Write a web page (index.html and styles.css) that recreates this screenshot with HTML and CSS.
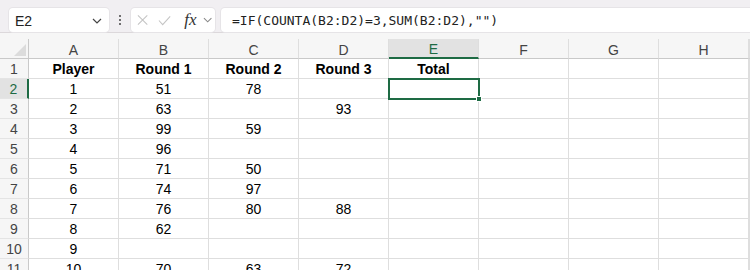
FILE: index.html
```html
<!DOCTYPE html>
<html lang="en">

<head>
    <meta charset="UTF-8">
    <title>Workbook - Sheet1</title>
    <link rel="stylesheet" href="styles.css">
</head>

<body>
    <div class="toolbar">
        <div class="name-box">
            <span>E2</span>
            <svg class="chev" width="10" height="6" viewBox="0 0 10 6"><path d="M1 1l4 4 4-4" fill="none" stroke="#444" stroke-width="1.2"/></svg>
        </div>
        <div class="dots"><i></i><i></i><i></i></div>
        <div class="fx-box">
            <svg width="12" height="12" viewBox="0 0 12 12"><path d="M1 1l10 10M11 1L1 11" stroke="#c4c4c4" stroke-width="1.1"/></svg>
            <svg width="14" height="11" viewBox="0 0 14 11"><path d="M1 5.5l4 4.5 8-9" fill="none" stroke="#c4c4c4" stroke-width="1.1"/></svg>
            <span class="fx">fx</span>
            <svg class="chev" width="10" height="6" viewBox="0 0 10 6"><path d="M1 1l4 4 4-4" fill="none" stroke="#888" stroke-width="1.1"/></svg>
        </div>
        <div class="formula">=IF(COUNTA(B2:D2)=3,SUM(B2:D2),"")</div>
    </div>
    <div class="gap"></div>
    <div class="sheet" id="sheet"></div>

    <script>
        const cols = ['A', 'B', 'C', 'D', 'E', 'F', 'G', 'H', ''];
        const data = [
            ['Player', 'Round 1', 'Round 2', 'Round 3', 'Total'],
            ['1', '51', '78'],
            ['2', '63', '', '93'],
            ['3', '99', '59'],
            ['4', '96'],
            ['5', '71', '50'],
            ['6', '74', '97'],
            ['7', '76', '80', '88'],
            ['8', '62'],
            ['9'],
            ['10', '70', '63', '72']
        ];

        const sheet = document.getElementById('sheet');

        function cell(cls, text) {
            const d = document.createElement('div');
            d.className = cls;
            d.textContent = text || '';
            sheet.appendChild(d);
            return d;
        }

        // header row
        cell('corner');
        cols.forEach(c => cell(c === 'E' ? 'col-head active' : 'col-head', c));

        // data rows
        data.forEach((row, r) => {
            cell(r === 1 ? 'row-head active' : 'row-head', r + 1);
            cols.forEach((c, i) => {
                let cls = 'cell';
                if (r === 0) cls += ' bold';
                if (r === 1 && c === 'E') cls += ' selected';
                cell(cls, row[i]);
            });
        });
    </script>
</body>

</html>
```

FILE: styles.css
```css
body {
    margin: 0;
    width: 750px;
    height: 270px;
    overflow: hidden;
    background: #fff;
    font-family: "Liberation Sans", Arial, sans-serif;
}

.toolbar {
    height: 33px;
    display: flex;
    align-items: flex-start;
    padding: 8px 0 0 9px;
    box-sizing: border-box;
    background: #f1eff2;
    border-bottom: 1px solid #dcd8db;
}

.name-box {
    width: 100px;
    height: 24px;
    box-sizing: border-box;
    display: flex;
    align-items: center;
    justify-content: space-between;
    padding: 1px 7px 0 6px;
    background: #fff;
    border-radius: 4px;
    box-shadow: 0 0 0 1px #e6e4e7;
    font-size: 14px;
    color: #222;
}

.dots {
    width: 22px;
    height: 24px;
    display: flex;
    flex-direction: column;
    align-items: center;
    justify-content: center;
    gap: 2px;
}

.dots i {
    width: 2px;
    height: 2px;
    background: #444;
    border-radius: 1px;
}

.fx-box {
    width: 84px;
    height: 24px;
    box-sizing: border-box;
    display: flex;
    align-items: center;
    gap: 10px;
    padding: 0 3px 0 6px;
    background: #fff;
    border-radius: 4px;
    box-shadow: 0 0 0 1px #e6e4e7;
}

.fx-box .fx {
    font-family: "Liberation Serif", serif;
    font-style: italic;
    font-size: 17px;
    color: #333;
    margin-left: 3px;
    margin-right: -4px;
}

.formula {
    flex: 1;
    height: 24px;
    margin-left: 6px;
    padding: 1px 0 0 11px;
    box-sizing: border-box;
    line-height: 24px;
    background: #fff;
    border-radius: 4px 0 0 4px;
    box-shadow: 0 0 0 1px #e6e4e7;
    font-family: "DejaVu Sans Mono", "Liberation Mono", monospace;
    font-size: 13px;
    color: #222;
}

.gap {
    height: 6px;
    background: #f6f6f6;
}

.sheet {
    display: grid;
    grid-template-columns: 29px repeat(8, 90px) 1px;
    grid-auto-rows: 20px;
    font-size: 14px;
}

.sheet > div {
    box-sizing: border-box;
    display: flex;
    align-items: center;
    justify-content: center;
    padding-top: 1px;
    white-space: nowrap;
}

.corner {
    background: #f6f6f6;
    border-right: 1px solid #c9c9c9;
    border-bottom: 1px solid #c9c9c9;
    position: relative;
}

.corner::after {
    content: "";
    position: absolute;
    right: 2px;
    bottom: 2px;
    border-style: solid;
    border-width: 0 0 12px 12px;
    border-color: transparent transparent #dcdcdc transparent;
}

.sheet > .col-head {
    padding-top: 2px;
    background: #f6f6f6;
    color: #444;
    border-right: 1px solid #dedede;
    border-bottom: 1px solid #c9c9c9;
}

.col-head.active {
    background: #e2e2e2;
    color: #1e6b44;
    border-bottom: 2px solid #1e6b44;
}

.row-head {
    background: #f6f6f6;
    color: #444;
    border-right: 1px solid #c9c9c9;
    border-bottom: 1px solid #e4e4e4;
}

.row-head.active {
    background: #e2e2e2;
    color: #1e6b44;
    border-right: 2px solid #1e6b44;
}

.cell {
    color: #000;
    border-right: 1px solid #dedede;
    border-bottom: 1px solid #dedede;
}

.cell.bold {
    font-weight: bold;
}

.cell.selected {
    position: relative;
    z-index: 1;
    outline: 2px solid #1e6b44;
    outline-offset: -1px;
}

.cell.selected::after {
    content: "";
    position: absolute;
    right: -4px;
    bottom: -4px;
    width: 6px;
    height: 6px;
    background: #1e6b44;
    border: 1px solid #fff;
    box-sizing: border-box;
}
```
